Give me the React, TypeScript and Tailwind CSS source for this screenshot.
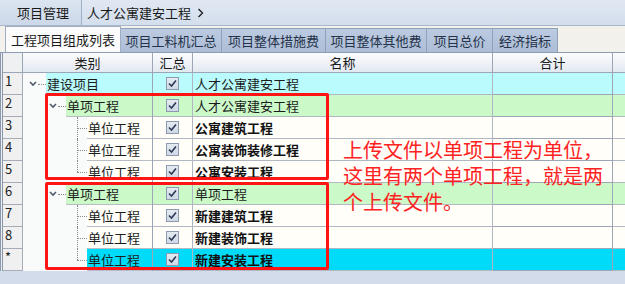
import React from 'react';

type Row = {
  no: string;
  level: 0 | 1 | 2;
  kind: string;
  name: string;
  bold?: boolean;
  bg: string;
  expand?: boolean;
};

const rows: Row[] = [
  { no: '1', level: 0, kind: '建设项目', name: '人才公寓建安工程', bg: 'bg-[#bafcfd]', expand: true },
  { no: '2', level: 1, kind: '单项工程', name: '人才公寓建安工程', bg: 'bg-[#cbfac8]', expand: true },
  { no: '3', level: 2, kind: '单位工程', name: '公寓建筑工程', bold: true, bg: 'bg-[#fffef9]' },
  { no: '4', level: 2, kind: '单位工程', name: '公寓装饰装修工程', bold: true, bg: 'bg-[#fffef9]' },
  { no: '5', level: 2, kind: '单位工程', name: '公寓安装工程', bold: true, bg: 'bg-[#fffef9]' },
  { no: '6', level: 1, kind: '单项工程', name: '单项工程', bg: 'bg-[#cbfac8]', expand: true },
  { no: '7', level: 2, kind: '单位工程', name: '新建建筑工程', bold: true, bg: 'bg-[#fffef9]' },
  { no: '8', level: 2, kind: '单位工程', name: '新建装饰工程', bold: true, bg: 'bg-[#fffef9]' },
  { no: '*', level: 2, kind: '单位工程', name: '新建安装工程', bold: true, bg: 'bg-[#00dbf9]' },
];

const tabs = ['项目工料机汇总', '项目整体措施费', '项目整体其他费', '项目总价', '经济指标'];
const tabWidths = ['w-[101px]', 'w-[104px]', 'w-[101px]', 'w-[66px]', 'w-[65px]'];

function Check() {
  return (
    <div className="w-[13px] h-[13px] border border-[#8d9bb0] bg-gradient-to-b from-[#e6ebf2] to-[#cfd8e4] flex items-center justify-center">
      <svg width="9" height="9" viewBox="0 0 9 9">
        <path d="M1 4.5 L3.5 7 L8 1.5" fill="none" stroke="#2c3a58" strokeWidth="1.6" />
      </svg>
    </div>
  );
}

function Chevron() {
  return (
    <svg width="8" height="6" viewBox="0 0 8 6" className="shrink-0">
      <path d="M1 1 L4 4 L7 1" fill="none" stroke="#505a68" strokeWidth="1.6" />
    </svg>
  );
}

function KindCell({ row, last }: { row: Row; last: boolean }) {
  const indent = row.level === 0 ? 'w-[23px]' : row.level === 1 ? 'w-[43px]' : 'w-[64px]';
  return (
    <div className="w-[130px] h-full flex border-r border-[#9ca6b6] relative">
      <div className={`${indent} h-full bg-[#f9fbfb] shrink-0 relative`}>
        {row.expand ? (
          <div className="absolute right-0 top-0 h-full flex items-center">
            <Chevron />
            <div className="w-[8px] ml-[1px] border-t border-dotted border-[#8a8a8a]" />
          </div>
        ) : (
          <>
            <div
              className={`absolute left-[54px] top-0 border-l border-dotted border-[#8a8a8a] ${last ? 'h-[11px]' : 'h-full'}`}
            />
            <div className="absolute left-[54px] top-[11px] w-[10px] border-t border-dotted border-[#8a8a8a]" />
          </>
        )}
      </div>
      <div className={`flex-1 h-full ${row.bg} border-b border-[#b7bcc6] pl-[1px] flex items-center text-[13px] text-[#1c1c1c]`}>
        {row.kind}
      </div>
    </div>
  );
}

export default function App() {
  return (
    <div
      className="w-[625px] h-[284px] bg-[#d3dcea] overflow-hidden relative text-[12px] text-[#1a1a1a]"
      style={{ fontFamily: '"Noto Sans CJK SC", "Noto Sans", sans-serif' }}
    >
      {/* Top bar */}
      <div className="h-[26px] flex bg-gradient-to-b from-[#dbe4f0] to-[#ccd8e8] border-b border-[#a9b7cb]">
        <div className="w-[81px] pl-[17px] flex items-center text-[13px]">项目管理</div>
        <div className="flex-1 border-l border-[#9fb0c8] bg-gradient-to-b from-[#e0e8f3] to-[#d3deec] pl-[5px] flex items-center text-[13px] gap-[6px]">
          <span>人才公寓建安工程</span>
          <svg width="7" height="10" viewBox="0 0 7 10">
            <path d="M1.5 1 L5.5 5 L1.5 9" fill="none" stroke="#222" strokeWidth="1.4" />
          </svg>
        </div>
      </div>

      {/* Tabs */}
      <div className="h-[27px] flex items-end pl-[5px] bg-[#f3f1ec] border-b border-[#8d9db5]">
        <div className="w-[116px] h-[26px] bg-[#fbfbfb] border border-b-0 border-[#a0aec2] flex items-center justify-center text-[13px]">
          工程项目组成列表
        </div>
        {tabs.map((t, i) => (
          <div
            key={t}
            className={`${tabWidths[i]} h-[24px] bg-gradient-to-b from-[#bccbe0] to-[#acbdd6] border border-b-0 border-l-0 border-[#8fa1bb] flex items-center justify-center text-[13px] text-[#25324a]`}
          >
            {t}
          </div>
        ))}
      </div>

      {/* Grid */}
      <div className="flex">
        <div className="w-[3px] border-l border-r border-[#8c98aa] bg-[#e9eef5]" />
        <div className="flex-1 bg-white">
          <div className="h-[20px] flex bg-gradient-to-b from-[#fbfcfe] to-[#e3e9f1] border-b border-[#9ca6b6] text-[13px]">
            <div className="w-[20px] border-r border-[#9ca6b6] bg-[#eef0f2]" />
            <div className="w-[130px] border-r border-[#9ca6b6] flex items-center justify-center">类别</div>
            <div className="w-[40px] border-r border-[#9ca6b6] flex items-center justify-center">汇总</div>
            <div className="w-[300px] border-r border-[#9ca6b6] flex items-center justify-center">名称</div>
            <div className="w-[120px] border-r border-[#9ca6b6] flex items-center justify-center">合计</div>
            <div className="flex-1" />
          </div>
          {rows.map((row, i) => {
            const last = i === 4 || i === 8;
            return (
              <div key={row.no} className="h-[22px] flex">
                <div className="w-[20px] h-full bg-[#f0f0f0] border-r border-b border-[#a7adb8] pl-[2px] text-[13px] leading-[16px] text-[#222]">
                  {row.no}
                </div>
                <KindCell row={row} last={last} />
                <div className={`w-[40px] h-full ${row.bg} border-r border-b border-[#b0b6c2] flex items-center justify-center`}>
                  <Check />
                </div>
                <div
                  className={`w-[300px] h-full ${row.bg} border-r border-b border-[#b0b6c2] pl-[2px] flex items-center text-[13px] ${
                    row.bold ? 'font-bold text-[#111]' : 'text-[#1c1c1c]'
                  }`}
                >
                  {row.name}
                </div>
                <div className={`w-[120px] h-full ${row.bg} border-r border-b border-[#9ca6b6]`} />
                <div className={`flex-1 h-full ${row.bg} border-b border-[#b0b6c2]`} />
              </div>
            );
          })}
        </div>
      </div>

      {/* Annotation overlays */}
      <div className="absolute left-[45px] top-[93px] w-[284px] h-[87px] border-[3px] border-[#ff1414] rounded-[2px]" />
      <div className="absolute left-[45px] top-[182px] w-[284px] h-[88px] border-[3px] border-[#ff1414] rounded-[2px]" />
      <div className="absolute left-[343px] top-[137px] text-[20px] leading-[26px] text-[#ff2222]">
        <div>上传文件以单项工程为单位，</div>
        <div>这里有两个单项工程，就是两</div>
        <div>个上传文件。</div>
      </div>
    </div>
  );
}
